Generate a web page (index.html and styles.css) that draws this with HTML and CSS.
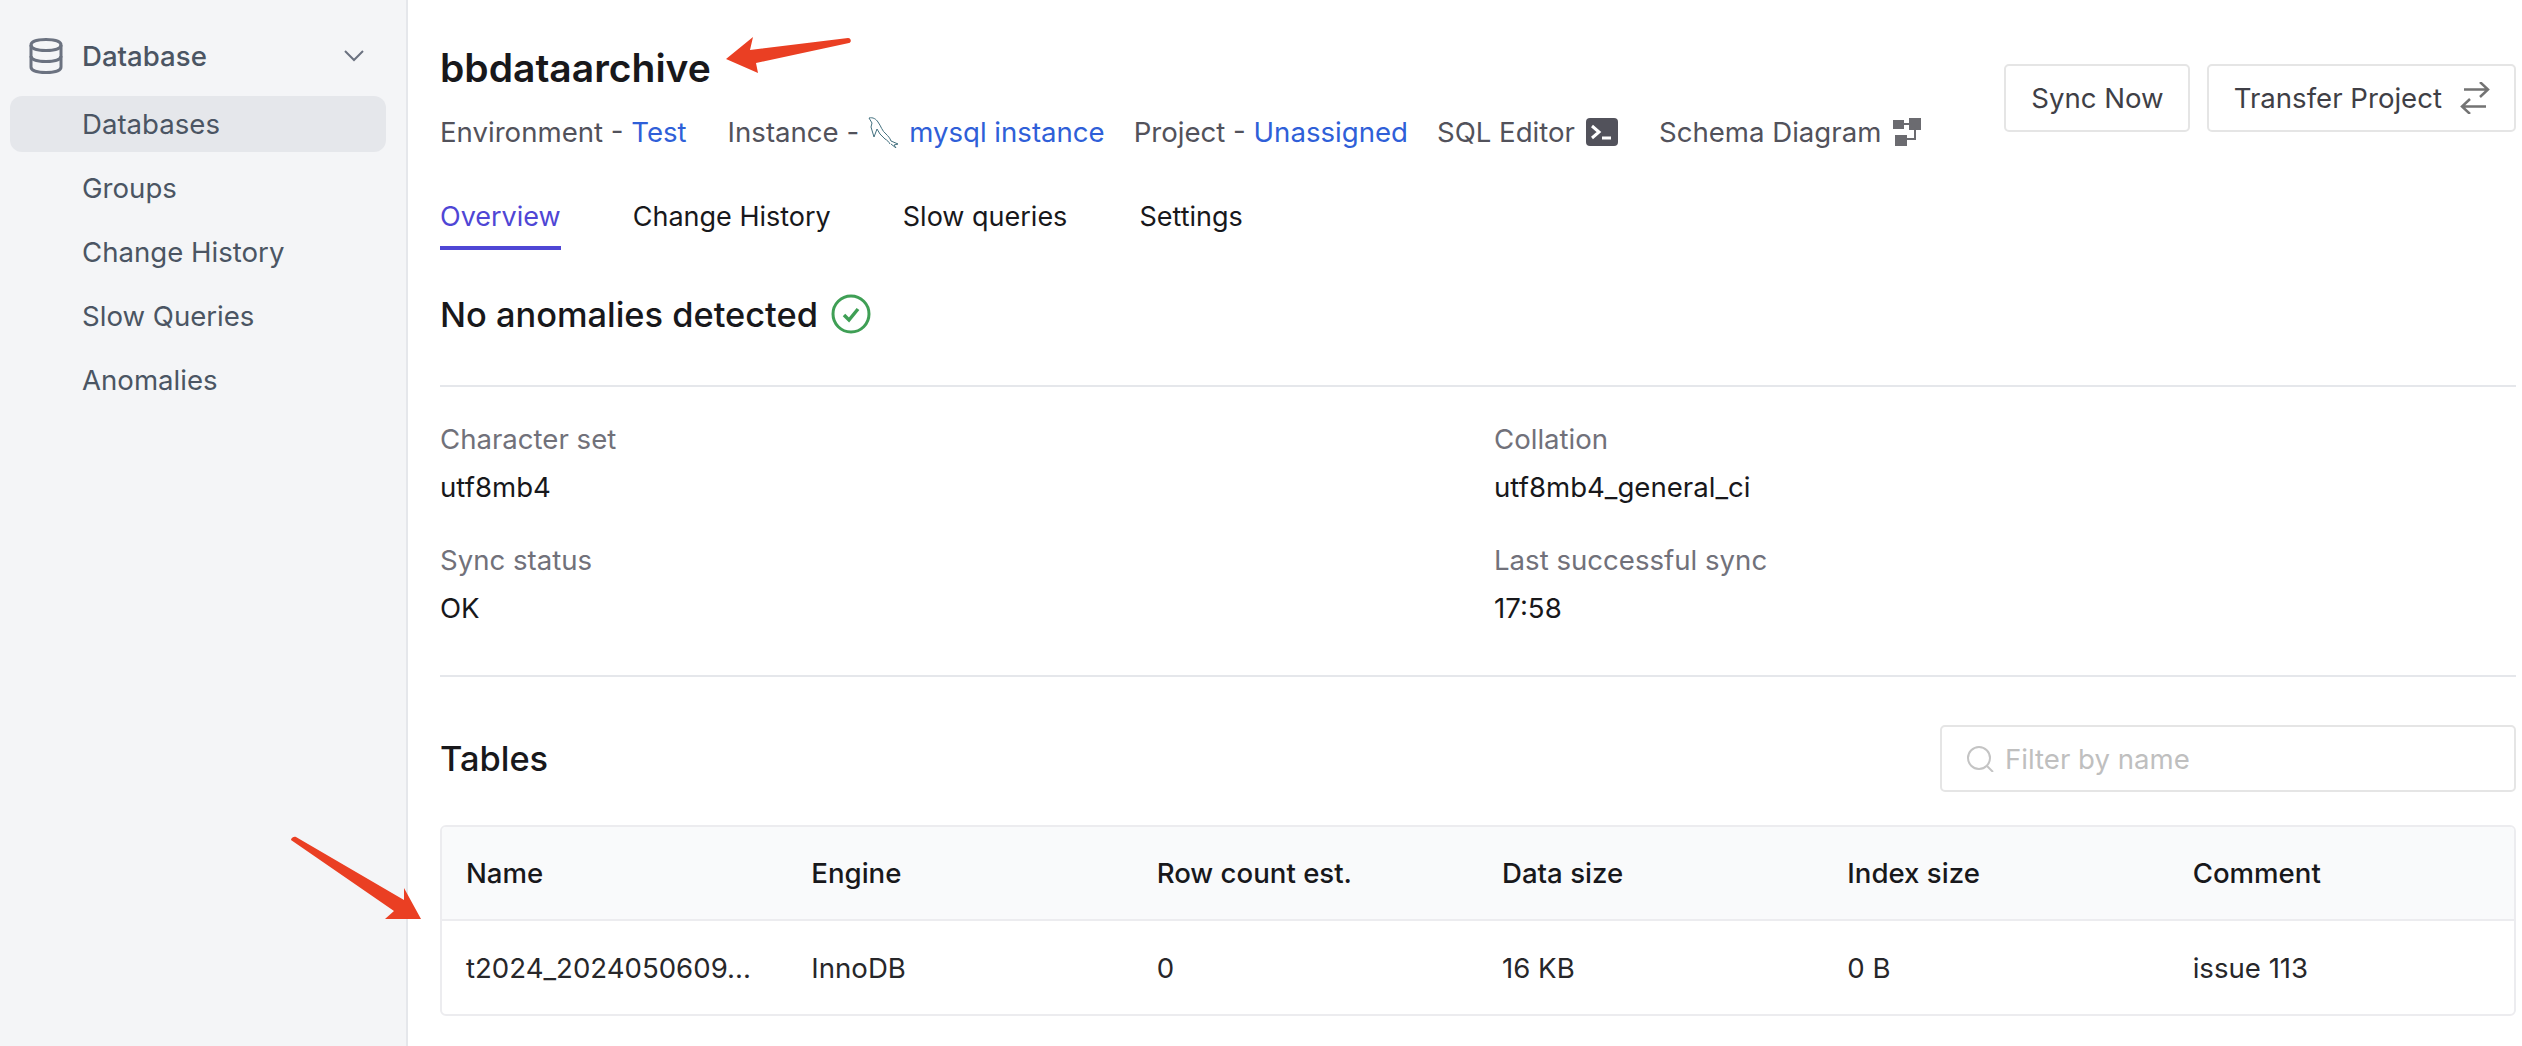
FILE: index.html
```html
<!DOCTYPE html>
<html lang="en">
<head>
  <meta charset="UTF-8">
  <title>bbdataarchive</title>
  <link rel="stylesheet" href="styles.css">
</head>
<body>
  <div class="app">
    <aside class="sidebar">
      <div class="nav-head">
        <svg class="nav-icon" viewBox="0 0 34 36" fill="none" stroke="#6b7280" stroke-width="3">
          <path d="M2 7c0-3.500 6.500-5.500 15-5.500S32 3.500 32 7v22c0 3.500-6.500 5.500-15 5.500S2 32.500 2 29z"/>
          <path d="M2 7c0 3.500 6.500 5.500 15 5.500S32 10.500 32 7M2 18c0 3.500 6.500 5.500 15 5.500S32 21.500 32 18"/>
        </svg>
        <span class="nav-title">Database</span>
        <svg class="nav-chevron" viewBox="0 0 20 12" fill="none" stroke="#6b7280" stroke-width="2"><path d="M1 1l9 9 9-9"/></svg>
      </div>
      <a class="nav-item active">Databases</a>
      <a class="nav-item">Groups</a>
      <a class="nav-item">Change History</a>
      <a class="nav-item">Slow Queries</a>
      <a class="nav-item">Anomalies</a>
    </aside>

    <main class="main">
      <header class="top">
        <div class="top-left">
          <h1 class="db-name">bbdataarchive</h1>
          <div class="meta">
            <span class="meta-env">Environment - <a class="link">Test</a></span>
            <span class="with-icon">Instance -
              <svg class="dolphin" viewBox="0 0 32 31" fill="none" stroke="#44717f" stroke-width="1">
                <path d="M1 1c4-1 7 1 9 4 3 4 4 9 8 12 2 2 4 4 5 7l7 3-4 1 2 3-5-4"/>
                <path d="M1 1l3 5-1 4 3 10 3-8 3 5 5 5c2 1 4 3 5 5"/>
              </svg>
              <a class="link">mysql instance</a></span>
            <span>Project - <a class="link">Unassigned</a></span>
            <span class="with-icon">SQL Editor
              <svg class="term-icon" viewBox="0 0 32 28">
                <rect width="32" height="28" rx="4" fill="#52525b"/>
                <path d="M6 8l7 6-7 6M16 20h9" fill="none" stroke="#fff" stroke-width="3"/>
              </svg>
            </span>
            <span class="with-icon meta-schema">Schema Diagram
              <svg class="schema-icon" viewBox="0 0 28 28" fill="#6b6b70">
                <rect x="0" y="2" width="11" height="9"/><rect x="16" y="0" width="12" height="12"/>
                <rect x="2" y="17" width="12" height="11"/><path d="M11 5h5v2h-5zM21 12h2v10h-9v-2h7z"/>
              </svg>
            </span>
          </div>
        </div>
        <div class="actions">
          <button class="btn">Sync Now</button>
          <button class="btn">Transfer Project
            <svg class="btn-icon" viewBox="0 0 30 32" fill="none" stroke="#737373" stroke-width="2.500"><path d="M4 7.500h24M20 0l8 7.500L20 15"/><path d="M26 24.500H2M10 17l-8 7.500L10 32"/></svg>
          </button>
        </div>
      </header>

      <nav class="tabs">
        <a class="tab active">Overview</a>
        <a class="tab">Change History</a>
        <a class="tab">Slow queries</a>
        <a class="tab">Settings</a>
      </nav>

      <section class="status">
        <h2 class="status-text">No anomalies detected</h2>
        <svg class="check" viewBox="0 0 40 40" fill="none" stroke="#3f9f55"><circle cx="20" cy="20" r="18" stroke-width="3"/><path d="M13 21l5 5 9-11" stroke-width="3.500"/></svg>
      </section>

      <section class="info">
        <div class="field"><div class="field-label">Character set</div><div class="field-value">utf8mb4</div></div>
        <div class="field"><div class="field-label">Collation</div><div class="field-value">utf8mb4_general_ci</div></div>
        <div class="field"><div class="field-label">Sync status</div><div class="field-value">OK</div></div>
        <div class="field"><div class="field-label">Last successful sync</div><div class="field-value">17:58</div></div>
      </section>

      <section class="tables-head">
        <h2 class="tables-title">Tables</h2>
        <label class="filter">
          <svg class="filter-icon" viewBox="0 0 27 26" fill="none" stroke="#c4c4c4" stroke-width="2"><circle cx="12" cy="12" r="11"/><path d="M20 20l6 6"/></svg>
          <input class="filter-input" type="text" placeholder="Filter by name">
        </label>
      </section>

      <div class="table-wrap">
        <div class="row head">
          <div>Name</div><div>Engine</div><div>Row count est.</div><div>Data size</div><div>Index size</div><div>Comment</div>
        </div>
        <div class="row body">
          <div>t2024_2024050609...</div><div>InnoDB</div><div>0</div><div>16 KB</div><div>0 B</div><div>issue 113</div>
        </div>
      </div>
    </main>
  </div>

  <!-- red annotation arrows drawn over the shot -->
  <svg class="arrow arrow-top" viewBox="0 0 126 36"><path d="M0 22L27 0l-3 13L122 1c3 0 4 4 1 5L30 26l2 10z" fill="#ea3f23"/></svg>
  <svg class="arrow arrow-left" viewBox="0 0 131 83"><path d="M1 4c0-2 3-4 5-3l108 63-0-12 17 31H95l9-8z" fill="#ea3f23"/></svg>
</body>
</html>
```

FILE: styles.css
```css
html, body {
  margin: 0;
  height: 100%;
  background: #fff;
  font-family: Inter, "Liberation Sans", sans-serif;
  font-size: 27.6px;
  color: #18181b;
}
h1, h2 {
  margin: 0;
}
a {
  text-decoration: none;
}

.app {
  display: flex;
  height: 1046px;
  overflow: hidden;
}

/* sidebar */
.sidebar {
  box-sizing: border-box;
  width: 408px;
  flex: none;
  padding: 30px 20px 0 10px;
  background: #f4f5f7;
  border-right: 2px solid #e5e7eb;
  color: #4b5563;
}
.nav-head {
  display: flex;
  align-items: center;
  height: 52px;
  margin-bottom: 14px;
  padding-left: 19px;
}
.nav-icon {
  width: 34px;
  height: 36px;
  margin-right: 19px;
}
.nav-title {
  flex: 1;
  font-weight: 500;
}
.nav-chevron {
  width: 20px;
  height: 12px;
  margin-right: 22px;
}
.nav-item {
  display: block;
  height: 56px;
  line-height: 56px;
  margin-bottom: 8px;
  padding-left: 72px;
  border-radius: 12px;
}
.nav-item.active {
  background: #e5e7eb;
}

/* main column */
.main {
  flex: 1;
  min-width: 0;
  padding: 0 6px 0 32px;
}
.top {
  display: flex;
  justify-content: space-between;
  height: 199px;
  padding-top: 42px;
  box-sizing: border-box;
}
.db-name {
  font-size: 39px;
  font-weight: 600;
  line-height: 52px;
}
.meta {
  display: flex;
  gap: 29px;
  margin-top: 20px;
  line-height: 36px;
  color: #52525b;
}
.meta-env {
  margin-right: 12px;
}
.meta-schema {
  margin-left: 12px;
}
.with-icon {
  display: flex;
  align-items: center;
  gap: 9px;
}
.link {
  color: #2f5fd8;
}
.dolphin {
  width: 32px;
  height: 31px;
}
.term-icon {
  width: 32px;
  height: 28px;
  margin-left: 2px;
}
.schema-icon {
  width: 28px;
  height: 28px;
  margin-left: 3px;
}
.actions {
  display: flex;
  gap: 17px;
  margin-top: 22px;
}
.btn {
  display: flex;
  align-items: center;
  gap: 18px;
  height: 68px;
  padding: 0 24px 0 25px;
  background: #fff;
  border: 2px solid #e5e5e5;
  border-radius: 5px;
  font: inherit;
  color: #3f3f46;
}
.btn-icon {
  width: 30px;
  height: 32px;
}

.tabs {
  display: flex;
  gap: 72px;
  height: 51px;
  font-size: 27px;
}
.tab {
  box-sizing: border-box;
  line-height: 36px;
  color: #18181b;
}
.tab.active {
  color: #4f46d5;
  border-bottom: 4px solid #4f46d5;
}

.status {
  display: flex;
  align-items: center;
  gap: 13px;
  height: 40px;
  margin-top: 44px;
}
.status-text {
  font-size: 34.4px;
  font-weight: 500;
}
.check {
  width: 40px;
  height: 40px;
}

.info {
  display: grid;
  grid-template-columns: 1054px 1fr;
  row-gap: 33px;
  margin-top: 51px;
  padding: 32px 0 47px;
  border-top: 2px solid #e5e7eb;
  border-bottom: 2px solid #e5e7eb;
}
.field-label {
  line-height: 40px;
  color: #71717a;
}
.field-value {
  margin-top: 8px;
  line-height: 40px;
}

.tables-head {
  display: flex;
  align-items: center;
  justify-content: space-between;
  margin-top: 48px;
}
.tables-title {
  font-size: 34.4px;
  font-weight: 500;
}
.filter {
  box-sizing: border-box;
  display: flex;
  align-items: center;
  gap: 11px;
  width: 576px;
  height: 67px;
  padding-left: 25px;
  border: 2px solid #e5e5e5;
  border-radius: 5px;
}
.filter-icon {
  width: 27px;
  height: 26px;
}
.filter-input {
  flex: 1;
  min-width: 0;
  border: 0;
  outline: 0;
  padding: 0;
  font: inherit;
}
.filter-input::placeholder {
  color: #bfbfbf;
}

.table-wrap {
  margin-top: 33px;
  border: 2px solid #ececef;
  border-radius: 6px;
  overflow: hidden;
}
.row {
  box-sizing: border-box;
  display: grid;
  grid-template-columns: repeat(6, 1fr);
  align-items: center;
  color: #27272a;
}
.row > div {
  padding-left: 24px;
}
.row.head {
  height: 94px;
  background: #f9fafb;
  border-bottom: 2px solid #ececef;
  font-weight: 500;
  color: #18181b;
}
.row.body {
  height: 93px;
}

/* annotation arrows */
.arrow {
  position: absolute;
}
.arrow-top {
  left: 726px;
  top: 37px;
  width: 126px;
  height: 36px;
}
.arrow-left {
  left: 290px;
  top: 836px;
  width: 131px;
  height: 83px;
}
```
